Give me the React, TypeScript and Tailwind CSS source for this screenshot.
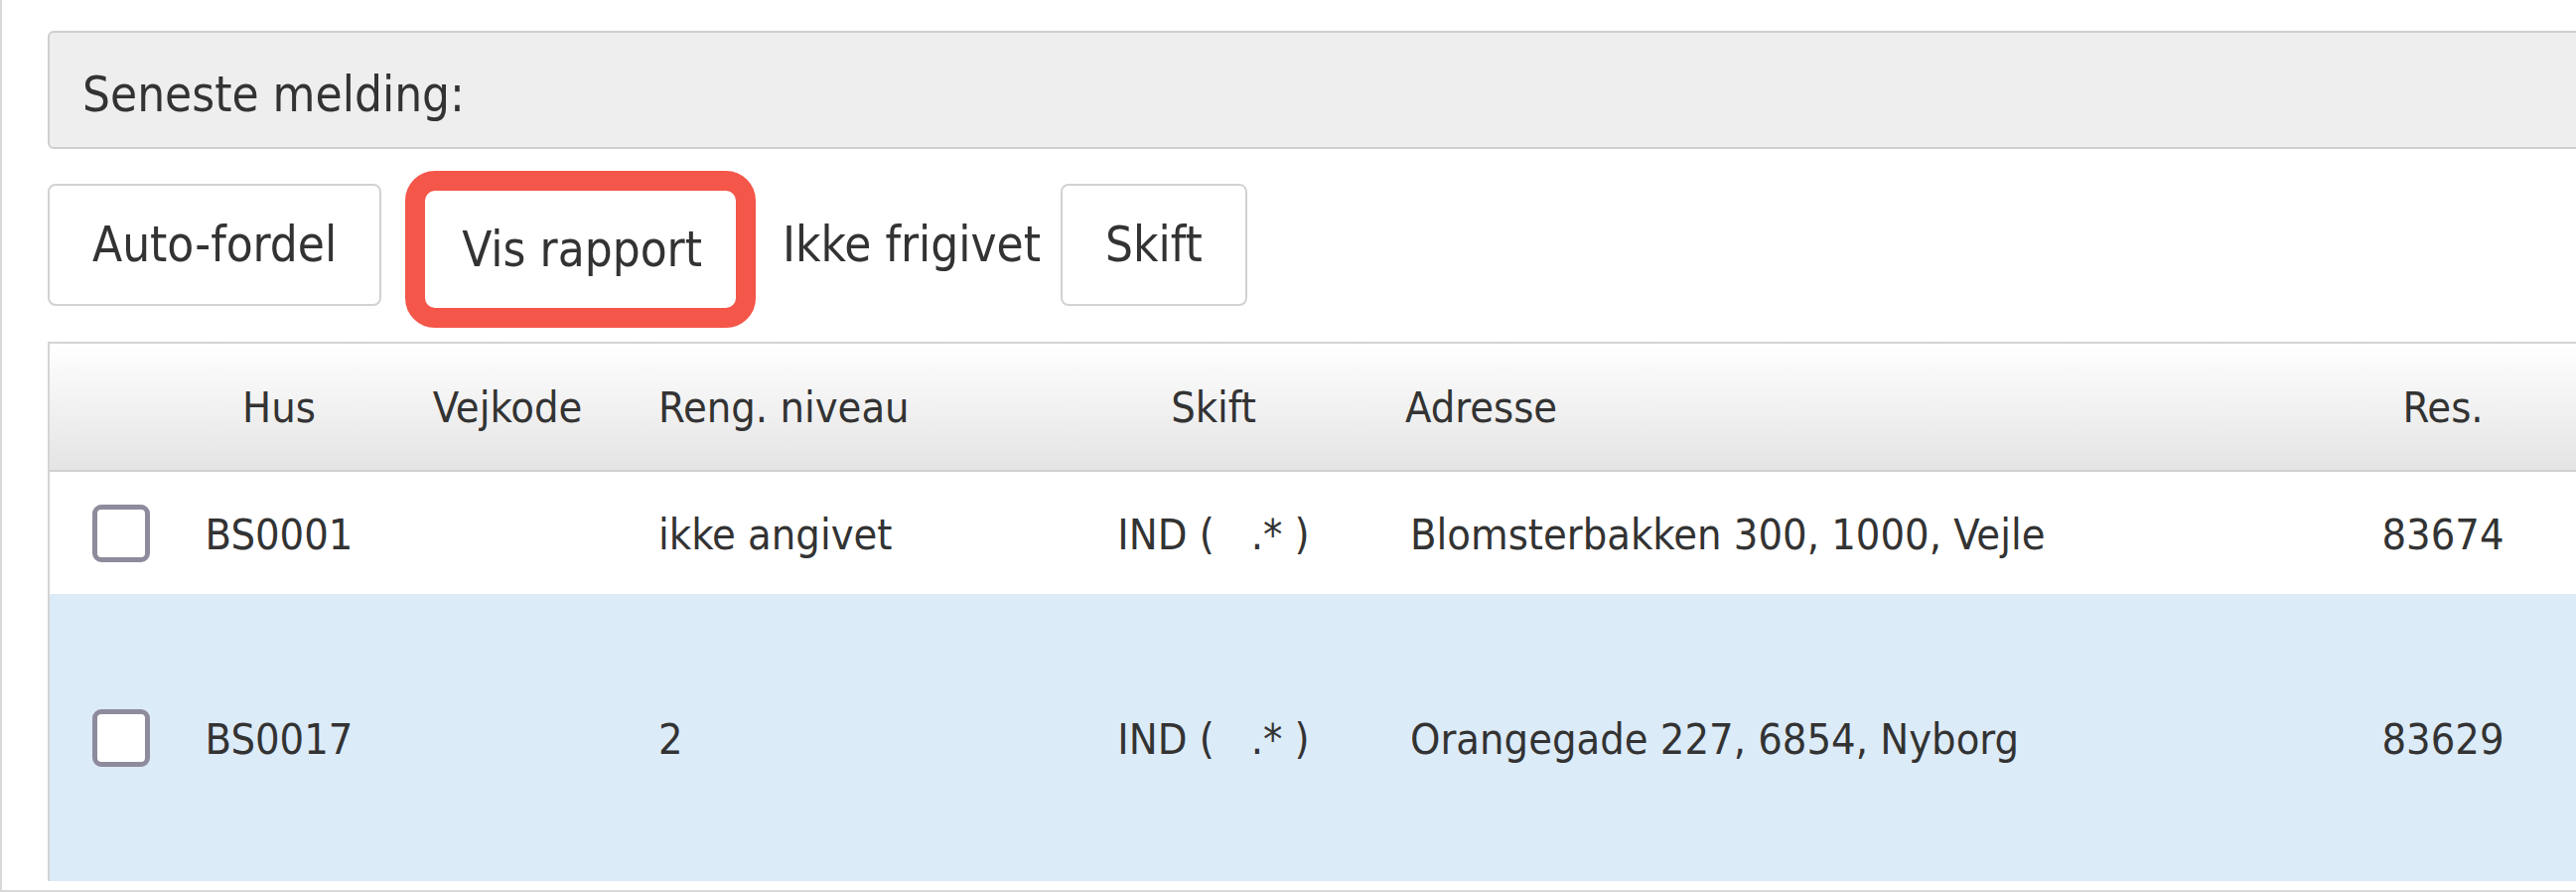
import React from "react";

type Row = {
  hus: string;
  vejkode: string;
  niveau: string;
  skift: string;
  adresse: string;
  res: string;
  selected?: boolean;
};

const rows: Row[] = [
  { hus: "BS0001", vejkode: "", niveau: "ikke angivet", skift: "IND (\u00a0\u00a0 .* )", adresse: "Blomsterbakken 300, 1000, Vejle", res: "83674" },
  { hus: "BS0017", vejkode: "", niveau: "2", skift: "IND (\u00a0\u00a0 .* )", adresse: "Orangegade 227, 6854, Nyborg", res: "83629", selected: true },
];

// column widths, shared by header and body rows
const cols = "grid grid-cols-[140px_182px_278px_450px_244px_986px_260px_1fr]";

function Checkbox() {
  return <span className="block w-[58px] h-[58px] rounded-[9px] border-[5px] border-[#8e8b9c] bg-white" />;
}

export default function App() {
  return (
    <div
      className="w-[2594px] h-[898px] overflow-hidden bg-white border-l-2 border-b-2 border-[#d9d9d9] text-[#333] font-stretch-condensed"
      style={{ fontFamily: '"DejaVu Sans Condensed", "DejaVu Sans", sans-serif' }}
    >
      <div className="pl-[46px] pt-[31px] w-[2800px]">
        {/* Message bar */}
        <div className="h-[119px] flex items-center pl-[33px] pt-[10px] bg-[#eeeeee] border-2 border-[#cfcfcf] rounded-[6px] text-[49px] leading-none">
          Seneste melding:
        </div>

        {/* Toolbar */}
        <div className="flex items-start mt-[22px] text-[49px] leading-none">
          <button className="mt-[13px] h-[123px] px-[43px] bg-white border-2 border-[#d2d2d2] rounded-[8px] leading-none">
            Auto-fordel
          </button>
          <button className="ml-[24px] h-[158px] pl-[37px] pr-[34px] bg-white border-[20px] border-[#f4564a] rounded-[30px] leading-none">
            Vis rapport
          </button>
          <span className="ml-[27px] mt-[13px] h-[123px] flex items-center">Ikke frigivet</span>
          <button className="ml-[20px] mt-[13px] h-[123px] px-[43px] bg-white border-2 border-[#d2d2d2] rounded-[8px] leading-none">
            Skift
          </button>
        </div>

        {/* Table */}
        <div className="mt-[14px] border-l-2 border-t-2 border-[#d4d4d4] text-[43px] leading-none">
          <div className={`${cols} h-[129px] items-center pt-[2px] bg-linear-to-b from-white to-[#e4e4e4] border-b-2 border-[#d0d0d0]`}>
            <div />
            <div className="text-center">Hus</div>
            <div className="text-center">Vejkode</div>
            <div className="pl-[13px]">Reng. niveau</div>
            <div className="text-center">Skift</div>
            <div className="pl-[71px]">Adresse</div>
            <div className="text-center">Res.</div>
            <div />
          </div>
          {rows.map((r) => (
            <div
              key={r.hus}
              className={`${cols} items-center ${r.selected ? "h-[289px] bg-[#dcebf8]" : "h-[123px] bg-white"}`}
            >
              <div className="pl-[43px]">
                <Checkbox />
              </div>
              <div className="text-center pt-[3px]">{r.hus}</div>
              <div className="text-center pt-[3px]">{r.vejkode}</div>
              <div className="pl-[13px] pt-[3px]">{r.niveau}</div>
              <div className="text-center whitespace-pre pt-[3px]">{r.skift}</div>
              <div className="pl-[76px] pt-[3px]">{r.adresse}</div>
              <div className="text-center pt-[3px]">{r.res}</div>
              <div />
            </div>
          ))}
        </div>
      </div>
    </div>
  );
}
